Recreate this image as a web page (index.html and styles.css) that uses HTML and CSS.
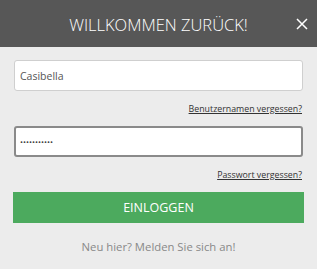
FILE: index.html
```html
<!DOCTYPE html>
<html lang="de">
<head>
<meta charset="utf-8">
<link rel="stylesheet" href="styles.css">
</head>
<body>
<div class="modal">
  <header class="head">
    <h1 class="title">WILLKOMMEN ZURÜCK!</h1>
    <svg class="close" width="12" height="12" viewBox="0 0 12 12"><path d="M1 1L11 11M11 1L1 11" stroke="#fff" stroke-width="1.5" fill="none"/></svg>
  </header>
  <form class="form">
    <div class="field">Casibella</div>
    <div class="link-row"><a class="link" href="#">Benutzernamen vergessen?</a></div>
    <div class="field focus">•••••••••••</div>
    <div class="link-row"><a class="link" href="#">Passwort vergessen?</a></div>
    <div class="btn">EINLOGGEN</div>
    <p class="signup">Neu hier? Melden Sie sich an!</p>
  </form>
</div>
</body>
</html>
```
FILE: styles.css
```css
html, body { margin: 0; padding: 0; }
body { background: #ececec; font-family: "Open Sans", "Liberation Sans", sans-serif; width: 317px; height: 269px; overflow: hidden; }
.head { height: 47px; background: #575757; position: relative; display: flex; align-items: center; justify-content: center; }
.title { margin: 0; font-size: 16.5px; font-weight: 300; color: #fff; letter-spacing: 0; padding-top: 1px; }
.close { position: absolute; right: 9px; top: 18px; }
.form { padding: 13px 14px 0 14px; display: flex; flex-direction: column; }
.field { height: 31px; box-sizing: border-box; background: #fff; border: 1px solid #cfcfcf; border-radius: 3px; font-size: 10.5px; color: #555; display: flex; align-items: center; padding-left: 5px; }
.field.focus { border: 2px solid #8a8a8a; padding-left: 4px; font-size: 8px; letter-spacing: 0; color: #444; }
.link-row { height: 35px; display: flex; justify-content: flex-end; align-items: center; }
.link { font-size: 8.8px; color: #333; text-decoration: underline; margin-right: 1px; }
.btn { margin: 0 -1px; height: 31px; background: #4caa5e; color: #fff; font-size: 12.5px; display: flex; align-items: center; justify-content: center; }
.signup { margin: 16px 0 0; text-align: center; font-size: 11.3px; color: #888; }
```
